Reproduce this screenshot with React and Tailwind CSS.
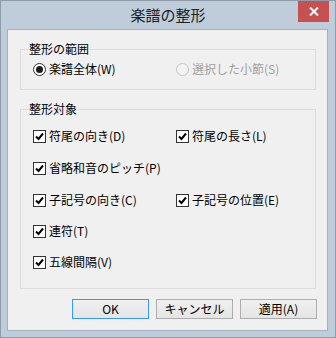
import React from "react";

const font = { fontFamily: '"Noto Sans CJK JP", "Noto Sans", sans-serif' };

function Check({ label }) {
  return (
    <div className="flex items-center h-[20px]">
      <div className="w-[13px] h-[13px] border border-[#333333] bg-white flex items-center justify-center shrink-0">
        <svg width="9" height="9" viewBox="0 0 9 9">
          <path d="M1 4.5 L3.5 7 L8 1.5" stroke="#000" strokeWidth="2" fill="none" />
        </svg>
      </div>
      <span className="ml-[3px] text-[12px] leading-none text-black whitespace-nowrap">{label}</span>
    </div>
  );
}

function Radio({ label, checked, disabled }) {
  return (
    <div className="flex items-center h-[20px]">
      <div
        className={
          "w-[13px] h-[13px] rounded-full border flex items-center justify-center shrink-0 " +
          (disabled ? "border-[#c4c4c4] bg-[#f4f4f4]" : "border-[#333333] bg-white")
        }
      >
        {checked && <div className="w-[7px] h-[7px] rounded-full bg-[#1a1a1a]" />}
      </div>
      <span
        className={
          "ml-[3px] text-[12px] leading-none whitespace-nowrap " +
          (disabled ? "text-[#a0a0a0]" : "text-black")
        }
      >
        {label}
      </span>
    </div>
  );
}

function Group({ title, className, children }) {
  return (
    <div className={"relative border border-[#dcdcdc] " + className}>
      <div className="absolute left-[7px] top-[-8px] px-[1px] bg-[#f0f0f0] text-[12px] leading-[14px] text-black">
        {title}
      </div>
      {children}
    </div>
  );
}

export default function App() {
  return (
    <div style={font} className="w-[336px] h-[338px] bg-[#bfcddb] border border-[#8e9cab] relative flex flex-col">
      <div className="h-[28px] flex items-center justify-center text-[15px] text-[#222]">楽譜の整形</div>
      <div className="absolute top-0 left-[297px] w-[31px] h-[21px] bg-[#c75050] flex items-center justify-center">
        <svg width="10" height="9" viewBox="0 0 10 9">
          <path d="M1 0.5 L9 8.5 M9 0.5 L1 8.5" stroke="#fff" strokeWidth="2" />
        </svg>
      </div>
      <div className="ml-[6px] mr-[7px] mb-[6px] flex-1 border border-[#a3b2c2] bg-[#f0f0f0] flex flex-col pl-[12px] pr-[11px] pt-[19px]">
        <Group title="整形の範囲" className="h-[41px] pl-[12px] pt-[9px]">
          <div className="flex">
            <div className="w-[143px]">
              <Radio label="楽譜全体(W)" checked />
            </div>
            <Radio label="選択した小節(S)" disabled />
          </div>
        </Group>
        <Group title="整形対象" className="mt-[19px] h-[180px] pl-[12px] pt-[16px]">
          <div className="flex">
            <div className="w-[143px]">
              <Check label="符尾の向き(D)" />
            </div>
            <Check label="符尾の長さ(L)" />
          </div>
          <div className="mt-[12px]">
            <Check label="省略和音のピッチ(P)" />
          </div>
          <div className="flex mt-[12px]">
            <div className="w-[143px]">
              <Check label="子記号の向き(C)" />
            </div>
            <Check label="子記号の位置(E)" />
          </div>
          <div className="mt-[11px]">
            <Check label="連符(T)" />
          </div>
          <div className="mt-[11px]">
            <Check label="五線間隔(V)" />
          </div>
        </Group>
        <div className="mt-[10px] flex justify-end gap-[7px] pr-[-1px] mr-[-1px]">
          <button className="w-[77px] h-[20px] border border-[#3399ff] bg-gradient-to-b from-[#f0f0f0] to-[#e5e5e5] text-[12px] leading-none text-black">OK</button>
          <button className="w-[77px] h-[20px] border border-[#adadad] bg-gradient-to-b from-[#f0f0f0] to-[#e5e5e5] text-[12px] leading-none text-black">キャンセル</button>
          <button className="w-[77px] h-[20px] border border-[#adadad] bg-gradient-to-b from-[#f0f0f0] to-[#e5e5e5] text-[12px] leading-none text-black">適用(A)</button>
        </div>
      </div>
    </div>
  );
}
